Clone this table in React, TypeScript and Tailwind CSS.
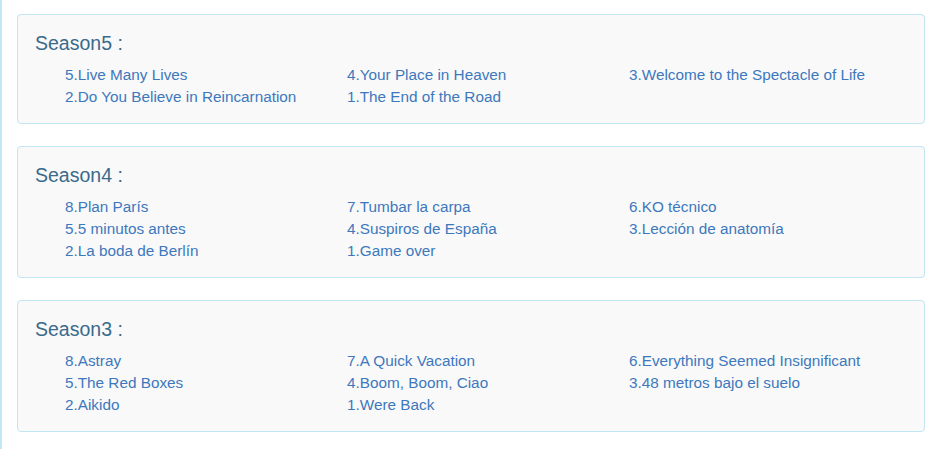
import React from "react";

type Season = { name: string; episodes: string[] };

const seasons: Season[] = [
  {
    name: "Season5",
    episodes: [
      "5.Live Many Lives",
      "4.Your Place in Heaven",
      "3.Welcome to the Spectacle of Life",
      "2.Do You Believe in Reincarnation",
      "1.The End of the Road",
    ],
  },
  {
    name: "Season4",
    episodes: [
      "8.Plan París",
      "7.Tumbar la carpa",
      "6.KO técnico",
      "5.5 minutos antes",
      "4.Suspiros de España",
      "3.Lección de anatomía",
      "2.La boda de Berlín",
      "1.Game over",
    ],
  },
  {
    name: "Season3",
    episodes: [
      "8.Astray",
      "7.A Quick Vacation",
      "6.Everything Seemed Insignificant",
      "5.The Red Boxes",
      "4.Boom, Boom, Ciao",
      "3.48 metros bajo el suelo",
      "2.Aikido",
      "1.Were Back",
    ],
  },
];

const App: React.FC = () => {
  return (
    <div
      className="min-h-[449px] bg-white border-l-2 border-[#c4e8f3] pl-[15px] pr-[11px] pt-[14px] pb-[17px] flex flex-col gap-[22px]"
      style={{ fontFamily: '"Liberation Sans", Arial, sans-serif' }}
    >
      {seasons.map((s) => (
        <div
          key={s.name}
          className="border border-[#bfe6f2] bg-[#f9f9f9] rounded-[4px] pl-[17px] pt-[18px] pb-[15px]"
        >
          <h3 className="text-[19.5px] leading-[20px] text-[#3a6a8c]">{s.name} :</h3>
          <ul className="mt-[11px] ml-[30px] grid grid-cols-[282px_282px_282px]">
            {s.episodes.map((ep) => (
              <li key={ep} className="text-[15.3px] leading-[22px] text-[#3d78bd] whitespace-nowrap">
                <a href="#">{ep}</a>
              </li>
            ))}
          </ul>
        </div>
      ))}
    </div>
  );
};

export default App;
